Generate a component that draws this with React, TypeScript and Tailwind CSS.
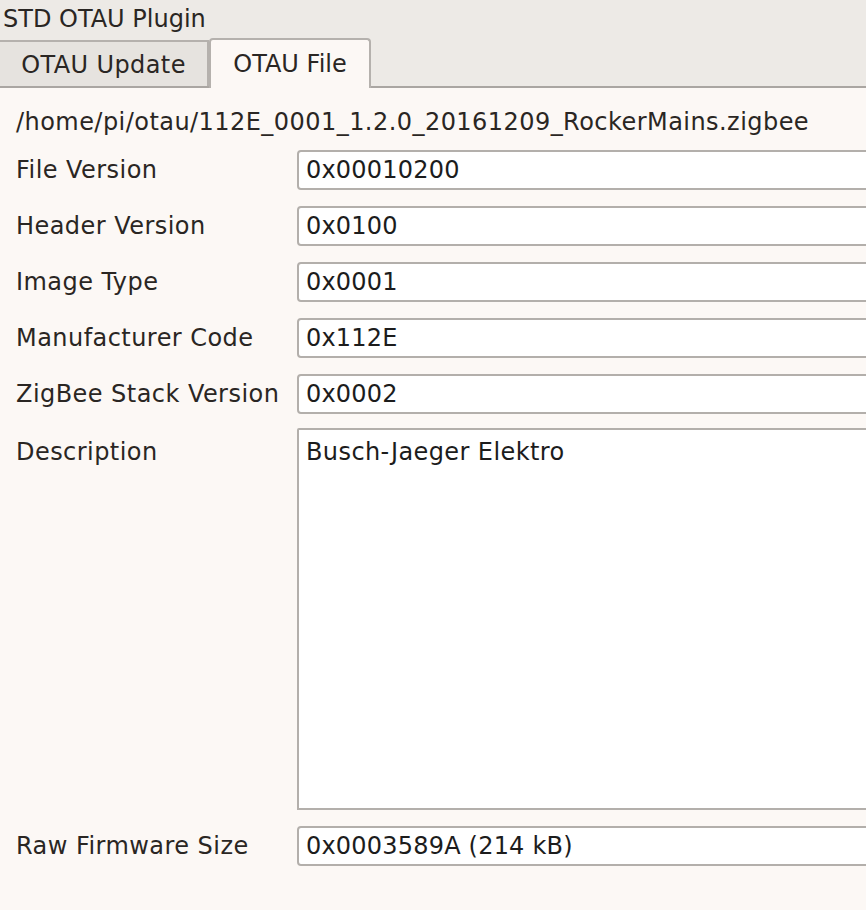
import React from "react";

const fields = [
    { label: "File Version", value: "0x00010200" },
    { label: "Header Version", value: "0x0100" },
    { label: "Image Type", value: "0x0001" },
    { label: "Manufacturer Code", value: "0x112E" },
    { label: "ZigBee Stack Version", value: "0x0002" },
];

const Field: React.FunctionComponent<{ value: string }> = ({ value }) => (
    <div className="h-[40px] flex-1 flex items-center pl-[7px] bg-white border-2 border-[#b3afab] rounded-[4px] text-[#1c1c1c] tracking-[0.2px]">
        {value}
    </div>
);

export default function App() {
    return (
        <div className="w-[866px] h-[910px] overflow-hidden bg-[#fcf8f5] text-[24px] text-[#2a2623]" style={{ fontFamily: '"DejaVu Sans", sans-serif' }}>
            <div className="h-[38px] bg-[#edeae6] flex items-center pl-[3px] leading-none">STD OTAU Plugin</div>

            <div className="h-[50px] bg-[#edeae6] border-b-2 border-[#aaa6a2] flex items-end">
                <div className="w-[209px] h-[46px] bg-[#e6e3df] border-t-2 border-r-2 border-[#b5b1ad] flex items-center justify-center leading-none pt-[2px] tracking-[0.4px]">
                    OTAU Update
                </div>
                <div className="w-[162px] h-[50px] -mb-[2px] bg-[#fcf8f5] border-2 border-b-0 border-[#b5b1ad] rounded-t-[4px] flex items-center justify-center leading-none pb-[1px]">
                    OTAU File
                </div>
            </div>

            <div className="pl-[16px] pt-[20px] w-[900px] tracking-[0.45px]">
                <div className="h-[28px] flex items-center mb-[14px]">/home/pi/otau/112E_0001_1.2.0_20161209_RockerMains.zigbee</div>

                <div className="flex flex-col gap-[16px]">
                    {fields.map((f) => (
                        <div key={f.label} className="flex items-center">
                            <div className="w-[281px]">{f.label}</div>
                            <Field value={f.value} />
                        </div>
                    ))}

                    <div className="flex items-start -mt-[2px]">
                        <div className="w-[281px] pt-[6px]">Description</div>
                        <div className="h-[382px] flex-1 bg-white border-2 border-[#b3afab] rounded-tl-[2px] pl-[7px] pt-[4px] text-[#1c1c1c] tracking-[0.4px]">
                            Busch-Jaeger Elektro
                        </div>
                    </div>

                    <div className="flex items-center">
                        <div className="w-[281px]">Raw Firmware Size</div>
                        <Field value="0x0003589A (214 kB)" />
                    </div>
                </div>
            </div>
        </div>
    );
}
